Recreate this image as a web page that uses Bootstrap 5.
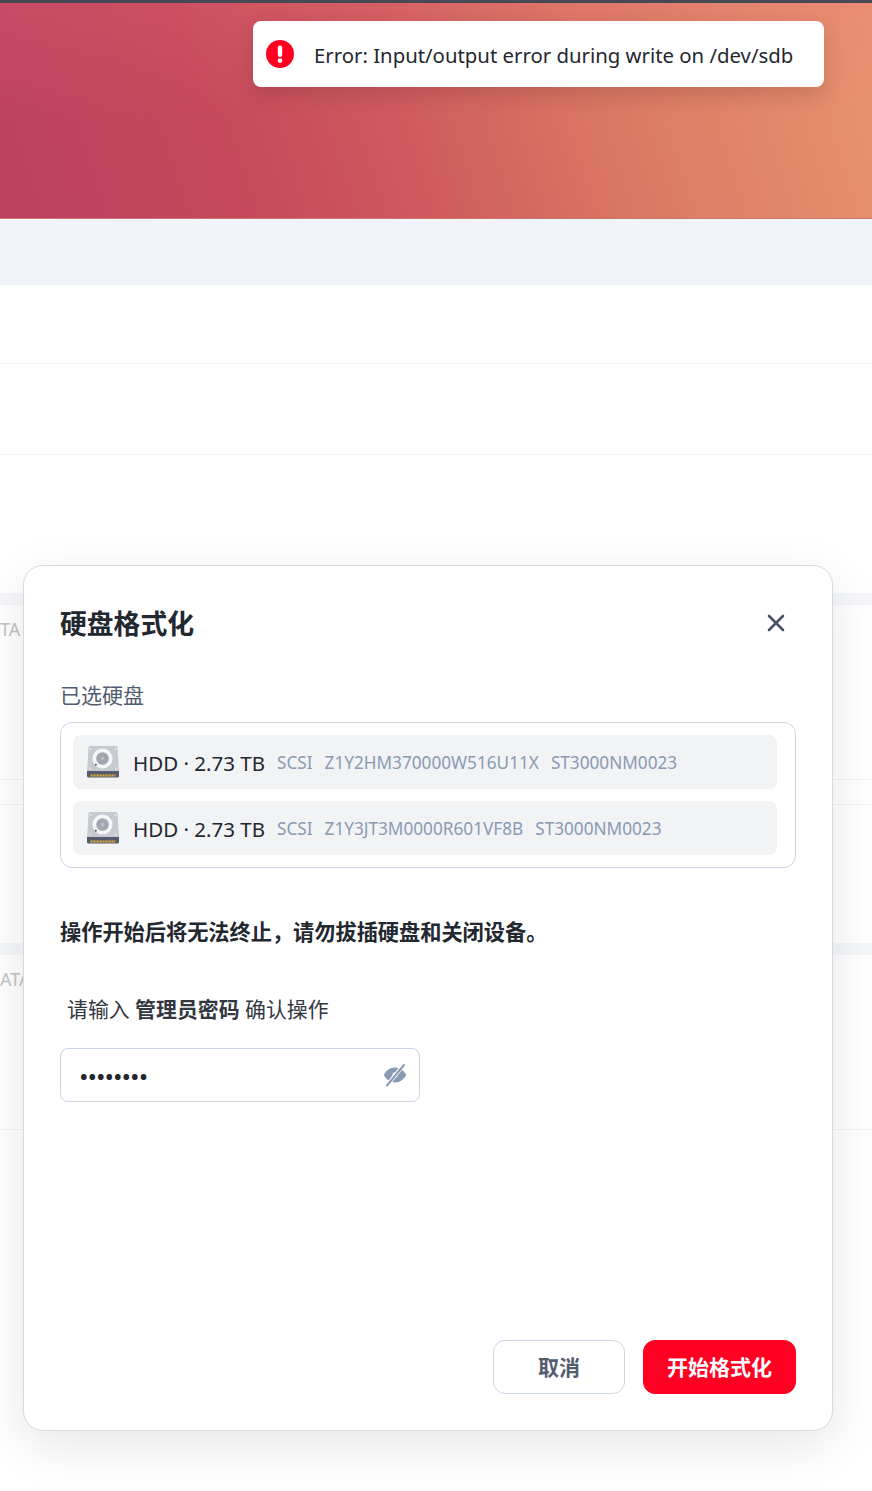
<!DOCTYPE html>
<html lang="zh">
<head>
<meta charset="utf-8">
<title>硬盘格式化</title>
<link href="https://cdn.jsdelivr.net/npm/bootstrap@5.3.0/dist/css/bootstrap.min.css" rel="stylesheet">
<style>
html,body{margin:0;height:1491px;overflow:hidden;background:#fff}
body{font-family:"Noto Sans","Noto Sans CJK SC",sans-serif;color:#23272f}
.stage{position:relative;width:872px;height:1491px;overflow:hidden;background:#fff}
.hero{height:219px;border-top:3px solid #474a55;border-bottom:1px solid #c9776f;background:linear-gradient(180deg,rgba(235,110,125,.2),rgba(235,110,125,0) 55%),linear-gradient(72deg,#bb4160 0%,#c4475a 24%,#cf5a5e 46%,#da7863 68%,#e8966f 100%)}
.band-top{height:66px;background:#f0f3f8}
.rowline{border-bottom:1px solid #f3f4f6}
.r1{height:79px}.r2{height:91px}
.gap1{height:138px}
.bandlow{height:12px;background:#f5f7fa}
.r3{height:175px;color:#c4c4c4;font-size:18px;padding-top:11px}
.r4{height:25px}
.gap2{height:138px}
.r5{height:175px;color:#c4c4c4;font-size:18px;padding-top:11px}
.lowtext{line-height:20px}
.toast-box{position:absolute;left:253px;top:21px;width:571px;height:66px;background:#fff;border-radius:8px;box-shadow:0 8px 20px rgba(60,30,30,.18);padding-left:13px;gap:20px;font-size:20.35px;color:#23272f}
.toast-txt{line-height:28px;padding-top:2px}
.dialog{position:absolute;left:23px;top:565px;width:810px;height:866px;background:#fff;border:1px solid #d6d9df;border-radius:20px;box-shadow:0 14px 50px rgba(0,0,0,.1);padding:36px}
.dlg-title{font-size:26.8px;font-weight:700;line-height:44px;margin:0;color:#23272f}
.closer{width:22px;height:22px;margin-right:9px;margin-bottom:2px;background:none;border:0;padding:0;line-height:0}
.sel-label{font-size:21px;line-height:30px;color:#525c70;margin-top:34px}
.disk-box{border:1px solid #c9d5e2;border-radius:12px;padding:12px 18px 12px 12px;margin-top:12px;gap:12px}
.disk-row{height:54px;background:#f2f3f5;border-radius:8px;padding-left:13px}
.disk-main{font-size:20.5px;color:#23272f;margin-left:13px;margin-right:12px;padding-top:2px}
.disk-meta{font-size:17.2px;color:#8a9ab3;margin-right:12px;padding-top:2px}
.warn{font-size:21.2px;font-weight:700;line-height:30px;margin-top:49px;color:#23272f}
.prompt{font-size:20.9px;line-height:30px;margin-top:47px;padding-left:7px;color:#33373f}
.pwd{width:360px;height:54px;border:1px solid #c9d5e2;border-radius:8px;margin-top:24px;padding:0 12px 0 19px}
.pwd-dots{font-size:20px;font-weight:700;letter-spacing:1px;color:#23272f;line-height:1;padding-top:4px}
.btn-cancel,.btn-go{height:54px;border-radius:12px;font-size:21px;font-weight:700;padding:0;line-height:1}
.btn-cancel{width:132px;background:#fff;border:1px solid #c9d5e2;color:#525c70}
.btn-go{width:153px;background:#ff0022;border:1px solid #ff0022;color:#fff}
.btn-go:hover{background:#ff0022;color:#fff}
.foot{margin-top:auto;gap:18px}
</style>
</head>
<body>
<div class="stage">
  <div class="hero"></div>
  <div class="band-top"></div>
  <div class="rowline r1"></div>
  <div class="rowline r2"></div>
  <div class="gap1"></div>
  <div class="bandlow"></div>
  <div class="rowline r3"><span class="lowtext">TA</span></div>
  <div class="rowline r4"></div>
  <div class="gap2"></div>
  <div class="bandlow"></div>
  <div class="rowline r5"><span class="lowtext">ATA</span></div>

  <div class="toast-box d-flex align-items-center">
    <svg width="28" height="28" viewBox="0 0 28 28" aria-hidden="true"><circle cx="14" cy="14" r="14" fill="#ff0022"/><rect x="11.8" y="5.5" width="4.4" height="11.5" rx="2.2" fill="#fff"/><circle cx="14" cy="20.6" r="2.3" fill="#fff"/></svg>
    <span class="toast-txt">Error: Input/output error during write on /dev/sdb</span>
  </div>

  <div class="dialog d-flex flex-column">
    <div class="d-flex align-items-center justify-content-between">
      <h5 class="dlg-title">硬盘格式化</h5>
      <button class="closer" type="button" aria-label="关闭"><svg width="22" height="22" viewBox="0 0 22 22"><path d="M4 4 18 18M18 4 4 18" stroke="#475066" stroke-width="2.6" stroke-linecap="round"/></svg></button>
    </div>
    <div class="sel-label">已选硬盘</div>
    <div class="disk-box d-flex flex-column">
      <div class="disk-row d-flex align-items-center">
        <svg width="34" height="34" viewBox="0 0 34 34" aria-hidden="true"><defs><g id="hdd"><path d="M4 1h26a1.500 1.500 0 0 1 1.500 1.500L33 27H1L2.500 2.500A1.500 1.500 0 0 1 4 1z" fill="#c8cad2"/><path d="M1 26h32v5a1.500 1.500 0 0 1-1.500 1.500h-29A1.500 1.500 0 0 1 1 31z" fill="#565c6e"/><path d="M4.500 29.500h25v2h-25z" fill="#e0b030"/><path d="M7 29.500v2M10 29.500v2M13 29.500v2M16 29.500v2M19 29.500v2M22 29.500v2M25 29.500v2M28 29.500v2" stroke="#565c6e" stroke-width="1"/><circle cx="16.500" cy="13.500" r="10" fill="#f6f7f8"/><circle cx="16.500" cy="13.500" r="6.300" fill="#a3a6b0"/><circle cx="16.500" cy="13.500" r="1.800" fill="#bcbfc8"/><circle cx="9.800" cy="19.800" r="1" fill="#4a4f5c"/><circle cx="4.500" cy="4" r="1" fill="#e3e5e9"/><circle cx="29.500" cy="4" r="1" fill="#e3e5e9"/><circle cx="4" cy="23.500" r="1" fill="#e3e5e9"/><circle cx="30" cy="23.500" r="1" fill="#e3e5e9"/></g></defs><use href="#hdd"/></svg>
        <span class="disk-main">HDD · 2.73 TB</span><span class="disk-meta">SCSI</span><span class="disk-meta">Z1Y2HM370000W516U11X</span><span class="disk-meta">ST3000NM0023</span>
      </div>
      <div class="disk-row d-flex align-items-center">
        <svg width="34" height="34" viewBox="0 0 34 34" aria-hidden="true"><use href="#hdd"/></svg>
        <span class="disk-main">HDD · 2.73 TB</span><span class="disk-meta">SCSI</span><span class="disk-meta">Z1Y3JT3M0000R601VF8B</span><span class="disk-meta">ST3000NM0023</span>
      </div>
    </div>
    <div class="warn">操作开始后将无法终止，请勿拔插硬盘和关闭设备。</div>
    <div class="prompt">请输入 <b>管理员密码</b> 确认操作</div>
    <div class="pwd d-flex align-items-center justify-content-between">
      <span class="pwd-dots">••••••••</span>
      <svg width="24" height="24" viewBox="0 0 24 24" aria-hidden="true"><path d="M.8 12c2.600-4.800 6.600-7.500 11.200-7.500s8.600 2.700 11.200 7.500c-2.600 4.800-6.600 7.500-11.200 7.500S3.400 16.800.8 12z" fill="#8a9ab3"/><circle cx="12" cy="12" r="2.500" fill="#fff"/><path d="M3.500 23 21 1.500" stroke="#fff" stroke-width="4"/><path d="M4 22.500 21 2" stroke="#8a9ab3" stroke-width="2" stroke-linecap="round"/></svg>
    </div>
    <div class="foot d-flex justify-content-end">
      <button class="btn btn-cancel" type="button">取消</button>
      <button class="btn btn-go" type="button">开始格式化</button>
    </div>
  </div>
</div>
<script src="https://cdn.jsdelivr.net/npm/bootstrap@5.3.0/dist/js/bootstrap.bundle.min.js"></script>
</body>
</html>
